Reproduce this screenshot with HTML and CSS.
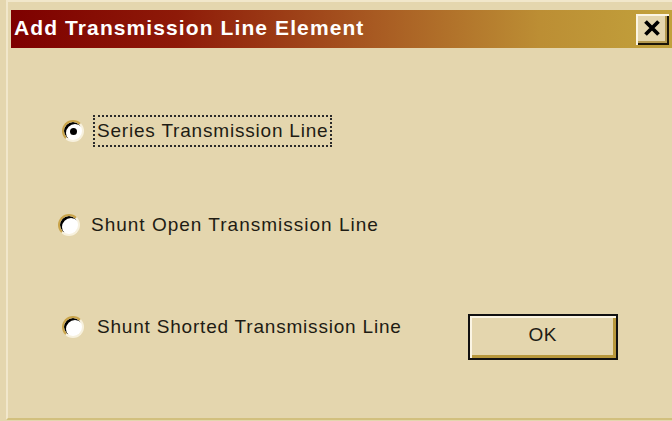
FILE: index.html
```html
<!DOCTYPE html>
<html>
<head>
<meta charset="utf-8">
<title>Add Transmission Line Element</title>
<link rel="stylesheet" href="styles.css">
</head>
<body>
<div class="window">
  <div class="titlebar">
    <span class="title">Add Transmission Line Element</span>
    <button class="close" type="button" aria-label="Close">
      <svg width="18" height="16" viewBox="0 0 18 16"><path d="M2.5 1.5 L15.5 14.5 M15.5 1.5 L2.5 14.5" stroke="#000" stroke-width="3.8" fill="none"/></svg>
    </button>
  </div>
  <div class="body">
    <label class="opt opt-1">
      <span class="radio checked"></span>
      <span class="text focus">Series Transmission Line</span>
    </label>
    <label class="opt opt-2">
      <span class="radio"></span>
      <span class="text">Shunt Open Transmission Line</span>
    </label>
    <div class="last-row">
      <label class="opt opt-3">
        <span class="radio"></span>
        <span class="text">Shunt Shorted Transmission Line</span>
      </label>
      <button class="ok" type="button"><span>OK</span></button>
    </div>
  </div>
</div>
</body>
</html>
```
FILE: styles.css
```css
html, body {
  margin: 0;
  padding: 0;
}
body {
  width: 672px;
  height: 421px;
  background: #e4d6ae;
  overflow: hidden;
  font-family: "Liberation Sans", Arial, sans-serif;
}
.window {
  margin-left: 6px;
  height: 420px;
  border-left: 2px solid #f1e7cb;
  border-top: 2px solid #f1e7cb;
  border-bottom: 2px solid #d2c07e;
  box-sizing: border-box;
  padding: 8px 0 0 3px;
  display: flex;
  flex-direction: column;
}
.titlebar {
  height: 38px;
  background: linear-gradient(to right, #7e0000 0%, #8e1a08 25%, #a85a22 55%, #bc8e34 80%, #c2a23c 100%);
  display: flex;
  align-items: center;
  justify-content: space-between;
  padding-left: 3px;
}
.title {
  color: #fff;
  font-weight: bold;
  font-size: 21px;
  letter-spacing: 1.1px;
  margin-top: -2px;
}
.close {
  width: 33px;
  height: 31px;
  margin-right: 3px;
  padding: 0;
  background: #e4d6ae;
  border: none;
  box-shadow: inset 2px 2px 0 #fbf5e4, inset -2px -2px 0 #1c1608, inset -4px -4px 0 #b59a50;
  display: flex;
  align-items: center;
  justify-content: center;
}
.close svg {
  display: block;
  margin: -2px 0 0 -1px;
}
.body {
  flex: 1;
  display: flex;
  flex-direction: column;
  font-size: 19px;
  color: #1e1c14;
}
.opt {
  display: flex;
  align-items: center;
  gap: 9px;
}
.opt-1 {
  margin: 67px 0 0 51px;
}
.opt-2 {
  margin: 62px 0 0 47px;
  gap: 7px;
}
.opt-2 .text {
  letter-spacing: 1px;
}
.last-row {
  display: flex;
  align-items: flex-start;
  margin-top: 70px;
}
.opt-3 {
  margin-left: 51px;
  gap: 9px;
}
.radio {
  width: 22px;
  height: 22px;
  border-radius: 50%;
  background: #fff;
  box-sizing: border-box;
  border: 2px solid;
  border-color: #c9a44a #f7f1de #f7f1de #c9a44a;
  box-shadow: inset 2px 2px 0 #000;
  position: relative;
  flex: none;
}
.radio.checked::after {
  content: "";
  position: absolute;
  left: 6px;
  top: 6px;
  width: 7px;
  height: 7px;
  border-radius: 50%;
  background: #000;
}
.text {
  letter-spacing: 0.8px;
  line-height: 28px;
  padding: 0 2px;
  border: 2px dotted transparent;
}
.text.focus {
  border-color: #2a2a2a;
}
.ok {
  margin: 3px 0 0 62px;
  width: 150px;
  height: 46px;
  padding: 0;
  background: #e4d6ae;
  border: 2px solid #111;
  box-shadow: inset 2px 2px 0 #fbf5e4, inset -3px -3px 0 #b8983c;
  font-family: "Liberation Sans", Arial, sans-serif;
  font-size: 19px;
  color: #1e1c14;
  letter-spacing: 0.5px;
  display: flex;
  align-items: center;
  justify-content: center;
}
.ok span {
  margin-top: -4px;
}
```
